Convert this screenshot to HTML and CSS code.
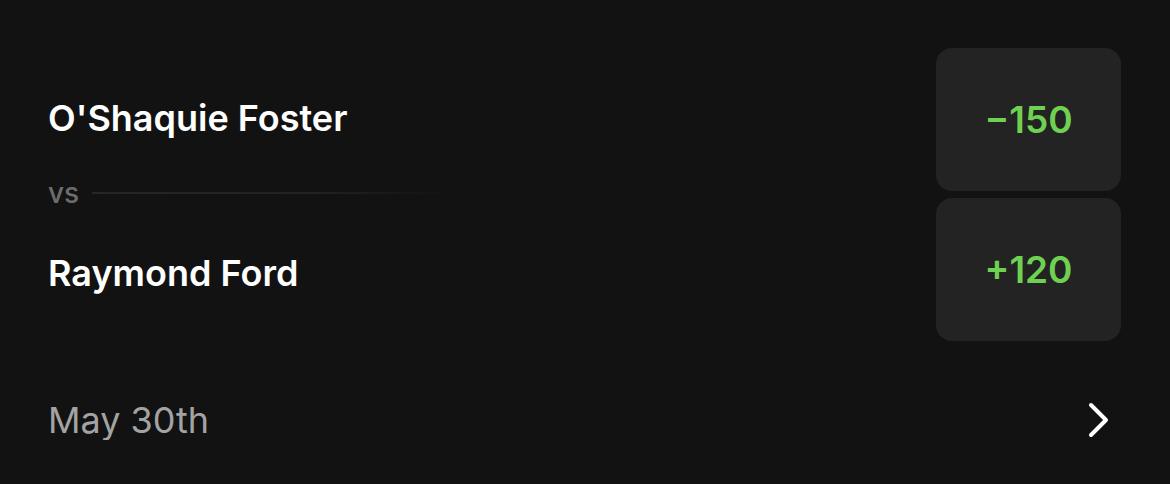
FILE: index.html
```html
<!DOCTYPE html>
<html lang="en">
<head>
    <meta charset="UTF-8">
    <meta name="viewport" content="width=device-width, initial-scale=1.0">
    <title>Fight Odds</title>
    <link rel="stylesheet" href="styles.css">
</head>
<body>

    <div class="card">
        <div class="matchup">
            <div class="fighters">
                <div class="name first">O'Shaquie Foster</div>
                <div class="versus">
                    <span>vs</span>
                    <div class="divider"></div>
                </div>
                <div class="name second">Raymond Ford</div>
            </div>

            <div class="odds">
                <button class="odd">&minus;150</button>
                <button class="odd">+120</button>
            </div>
        </div>

        <div class="footer">
            <span class="date">May 30th</span>
            <svg class="chevron" width="26" height="40" viewBox="0 0 26 40">
                <polyline points="5,5 20,20 5,35" fill="none" stroke="#ffffff" stroke-width="4" stroke-linecap="round" stroke-linejoin="round"/>
            </svg>
        </div>
    </div>

</body>
</html>
```

FILE: styles.css
```css
body {
    margin: 0;
    background-color: #121212;
    color: #ffffff;
    font-family: Inter, "Noto Sans", sans-serif;
}

.card {
    padding: 48px 49px 0 48px;
}

.matchup {
    display: flex;
    justify-content: space-between;
}

.fighters {
    display: flex;
    flex-direction: column;
}

.name {
    font-size: 36px;
    font-weight: 600;
    line-height: 40px;
}

.name.first {
    margin-top: 50px;
}

.name.second {
    margin-top: 48px;
}

.versus {
    display: flex;
    align-items: center;
    gap: 13px;
    margin-top: 43px;
    height: 24px;
}

.versus span {
    font-size: 28px;
    font-weight: 500;
    color: #6c6c6c;
    line-height: 24px;
}

.divider {
    width: 360px;
    height: 2px;
    background: linear-gradient(to right, #262626, #222222 60%, rgba(34, 34, 34, 0));
}

.odds {
    display: flex;
    flex-direction: column;
    gap: 7px;
    width: 185px;
}

.odd {
    height: 143px;
    border: none;
    border-radius: 16px;
    background: #232323;
    color: #6fd152;
    font-family: Inter, "Noto Sans", sans-serif;
    font-size: 37px;
    font-weight: 600;
    padding: 0;
    cursor: pointer;
}

.footer {
    display: flex;
    justify-content: space-between;
    align-items: center;
    margin-top: 59px;
    height: 40px;
}

.date {
    font-size: 36px;
    color: #a3a3a3;
    line-height: 40px;
}

.chevron {
    margin-right: 9px;
}
```
